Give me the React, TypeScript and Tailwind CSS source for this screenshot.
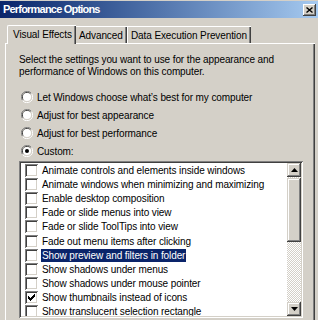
import React from 'react'

const font = { fontFamily: '"Liberation Sans", Arial, sans-serif' }

const items: { label: string; checked?: boolean; selected?: boolean }[] = [
  { label: 'Animate controls and elements inside windows' },
  { label: 'Animate windows when minimizing and maximizing' },
  { label: 'Enable desktop composition' },
  { label: 'Fade or slide menus into view' },
  { label: 'Fade or slide ToolTips into view' },
  { label: 'Fade out menu items after clicking' },
  { label: 'Show preview and filters in folder', selected: true },
  { label: 'Show shadows under menus' },
  { label: 'Show shadows under mouse pointer' },
  { label: 'Show thumbnails instead of icons', checked: true },
  { label: 'Show translucent selection rectangle' },
]

function Radio({ checked }: { checked?: boolean }) {
  return (
    <svg width="12" height="12" viewBox="0 0 12 12" className="shrink-0">
      <path d="M10.5 2.5 A5.5 5.5 0 0 0 1.5 9.5" fill="none" stroke="#808080" />
      <path d="M9.6 3.2 A4.5 4.5 0 0 0 2.4 8.8" fill="none" stroke="#404040" />
      <path d="M1.5 9.5 A5.5 5.5 0 0 0 10.5 2.5" fill="none" stroke="#ffffff" />
      <path d="M2.4 8.8 A4.5 4.5 0 0 0 9.6 3.2" fill="none" stroke="#d4d0c8" />
      <circle cx="6" cy="6" r="4" fill="#ffffff" />
      {checked && <circle cx="6" cy="6" r="2" fill="#000000" />}
    </svg>
  )
}

function Checkbox({ checked }: { checked?: boolean }) {
  return (
    <div className="w-[13px] h-[13px] shrink-0 bg-white shadow-[inset_1px_1px_0_#808080,inset_-1px_-1px_0_#ffffff,inset_2px_2px_0_#404040,inset_-2px_-2px_0_#d4d0c8] flex items-center justify-center">
      {checked && (
        <svg width="7" height="7" viewBox="0 0 7 7">
          <path d="M0 2h1v1h1v1h1v-1h1v-1h1v-1h1v-1h1v3h-1v1h-1v1h-1v1h-1v1h-1v-1h-1v-1h-1z" fill="#000" />
        </svg>
      )}
    </div>
  )
}

function ScrollButton({ up }: { up?: boolean }) {
  return (
    <div className="w-[14px] h-[14px] bg-[#d4d0c8] shadow-[inset_-1px_-1px_0_#404040,inset_1px_1px_0_#d4d0c8,inset_-2px_-2px_0_#808080,inset_2px_2px_0_#ffffff] flex items-center justify-center">
      <svg width="7" height="4" viewBox="0 0 7 4">
        {up ? <path d="M3.5 0L7 4H0z" fill="#000" /> : <path d="M0 0h7L3.5 4z" fill="#000" />}
      </svg>
    </div>
  )
}

export default function App() {
  return (
    <div className="w-[318px] h-[320px] overflow-hidden bg-[#d4d0c8] text-[10px] tracking-[-0.1px] text-black whitespace-nowrap" style={font}>
      {/* title bar */}
      <div className="mt-[1px] h-[17px] flex items-center justify-between pl-[3px] pr-[2px] bg-gradient-to-r from-[#0a246a] to-[#a6caf0]">
        <span className="text-white font-bold text-[11px] tracking-[-0.8px] leading-none">Performance Options</span>
        <div className="w-[13px] h-[12px] bg-[#d4d0c8] shadow-[inset_-1px_-1px_0_#404040,inset_1px_1px_0_#ffffff,inset_-2px_-2px_0_#808080] flex items-center justify-center">
          <svg width="7" height="6" viewBox="0 0 7 6">
            <path d="M0.5 0.5L6.5 5.5M6.5 0.5L0.5 5.5" stroke="#000" strokeWidth="1.4" />
          </svg>
        </div>
      </div>

      <div className="pt-[7px] pl-[5px] pr-[3px]">
        {/* tabs */}
        <div className="flex items-end pl-[2px] h-[19px] relative z-10">
          <div className="w-[69px] h-[19px] bg-[#d4d0c8] border-l border-t border-white rounded-tl-[2px] shadow-[inset_-1px_0_0_#404040,inset_-2px_0_0_#808080] flex items-center pl-[5px] pb-[2px]">
            Visual Effects
          </div>
          <div className="w-[51px] h-[17px] mb-[1px] border-t border-white shadow-[inset_-1px_0_0_#404040,inset_-2px_0_0_#808080] flex items-center pl-[3px]">
            Advanced
          </div>
          <div className="w-[124px] h-[17px] mb-[1px] border-l border-t border-white shadow-[inset_-1px_0_0_#404040,inset_-2px_0_0_#808080] flex items-center pl-[3px]">
            Data Execution Prevention
          </div>
        </div>

        {/* panel */}
        <div className="-mt-[1px] h-[300px] border-l border-t border-white shadow-[inset_-1px_0_0_#404040,inset_-2px_0_0_#808080] pl-[13px] pr-[12px] pt-[10px]">
          <p className="leading-[12px]">
            Select the settings you want to use for the appearance and
            <br />
            performance of Windows on this computer.
          </p>

          <div className="mt-[10px] flex flex-col">
            {[
              'Let Windows choose what\u2019s best for my computer',
              'Adjust for best appearance',
              'Adjust for best performance',
              'Custom:',
            ].map((label, i) => (
              <div key={label} className="h-[18px] flex items-center gap-[4px] pl-[2px]">
                <Radio checked={i === 3} />
                <span>{label}</span>
              </div>
            ))}
          </div>

          {/* list */}
          <div className="mt-[1px] w-[284px] h-[157px] bg-white flex shadow-[inset_1px_1px_0_#808080,inset_-1px_-1px_0_#ffffff,inset_2px_2px_0_#404040,inset_-2px_-2px_0_#d4d0c8] p-[2px]">
            <div className="flex-1 flex flex-col overflow-hidden">
              {items.map((it) => (
                <div key={it.label} className="h-[14.2px] shrink-0 flex items-center pl-[4px] gap-[3px]">
                  <Checkbox checked={it.checked} />
                  <span className={`leading-[13px] px-[1px] ${it.selected ? 'bg-[#0a246a] text-white' : ''}`}>{it.label}</span>
                </div>
              ))}
            </div>
            <div className="w-[14px] flex flex-col bg-[repeating-conic-gradient(#d4d0c8_0_25%,#ffffff_0_50%)] bg-[length:2px_2px]">
              <ScrollButton up />
              <div className="mt-[1px] h-[64px] bg-[#d4d0c8] shadow-[inset_-1px_-1px_0_#404040,inset_1px_1px_0_#d4d0c8,inset_-2px_-2px_0_#808080,inset_2px_2px_0_#ffffff]" />
              <div className="flex-1" />
              <ScrollButton />
            </div>
          </div>
        </div>
      </div>
    </div>
  )
}
